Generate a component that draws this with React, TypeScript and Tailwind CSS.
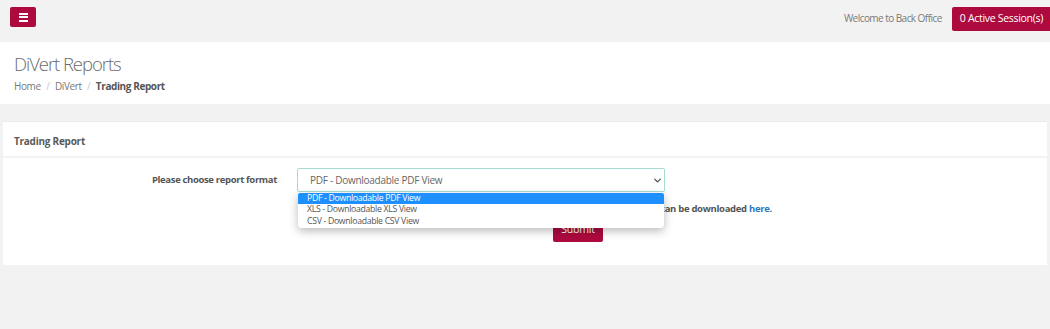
import { ChevronDown } from "lucide-react";

const crimson = "bg-[#ad0a3e]";

export default function App() {
  const options = [
    "PDF - Downloadable PDF View",
    "XLS - Downloadable XLS View",
    "CSV - Downloadable CSV View",
  ];

  return (
    <div className="min-h-[329px] bg-[#f2f2f2] font-['Open_Sans',sans-serif]">
      {/* Top bar */}
      <div className="flex h-[42px] items-start justify-between pt-[7px] pl-[10px]">
        <button className={`${crimson} flex h-[20px] w-[26px] flex-col items-center justify-center gap-[1.5px] rounded-[2px]`}>
          <span className="block h-[2px] w-[9px] bg-white" />
          <span className="block h-[2px] w-[9px] bg-white" />
          <span className="block h-[2px] w-[9px] bg-white" />
        </button>
        <div className="flex items-start gap-[10px]">
          <span className="pt-[4px] text-[10px] tracking-[-0.55px] text-[#7a7a7a]">Welcome to Back Office</span>
          <button className={`${crimson} h-[24px] rounded-l-[2px] pl-[8px] pr-[7px] text-[10.5px] tracking-[-0.3px] text-white`}>
            0 Active Session(s)
          </button>
        </div>
      </div>

      {/* Page header */}
      <div className="h-[62px] bg-white px-[14px] pt-[10px]">
        <h1 className="text-[18.5px] font-light leading-[24px] tracking-[-1.05px] text-[#6b6b6b]">DiVert Reports</h1>
        <div className="mt-[3px] flex items-center gap-[5.5px] text-[10px] tracking-[-0.4px] text-[#777]">
          <span>Home</span>
          <span className="text-[#c8c8c8]">/</span>
          <span>DiVert</span>
          <span className="text-[#c8c8c8]">/</span>
          <span className="font-bold text-[#555]">Trading Report</span>
        </div>
      </div>

      {/* Panel */}
      <div className="px-[3px] pt-[17px]">
        <div className="h-[144px] border-t border-[#ececec] bg-white">
          <div className="flex h-[36px] items-center border-b-2 border-[#f3f3f3] px-[11px] pt-[4px]">
            <span className="text-[10px] font-bold tracking-[-0.25px] text-[#5a5a5a]">Trading Report</span>
          </div>

          <div className="pt-[10px]">
            <div className="flex items-start">
              <div className="w-[274px] pt-[5px] text-right text-[9.5px] font-bold tracking-[-0.35px] text-[#555]">
                Please choose report format
              </div>
              <div className="relative ml-[20px] w-[368px]">
                <div className="flex h-[24px] items-center justify-between rounded-[2px] border border-[#a6dcd2] bg-white pl-[12px] pr-[1px] text-[10px] tracking-[-0.27px] text-[#666]">
                  <span>PDF - Downloadable PDF View</span>
                  <ChevronDown className="h-[11px] w-[11px] text-[#555]" strokeWidth={3} />
                </div>
                <div className="absolute left-[1px] right-[1px] top-[25px] z-10 overflow-hidden rounded-b-[4px] rounded-t-[2px] bg-white pb-[1px] shadow-[0_3px_10px_rgba(0,0,0,0.28)]">
                  {options.map((o, i) => (
                    <div
                      key={o}
                      className={`h-[11.3px] pl-[9px] text-[8.7px] leading-[11px] tracking-[-0.3px] ${
                        i === 0 ? "bg-[#1e8fff] text-white" : "text-[#555]"
                      }`}
                    >
                      {o}
                    </div>
                  ))}
                </div>
              </div>
            </div>

            <div className="mt-[10px] w-[769px] text-right text-[9.5px] font-bold leading-[14px] tracking-[-0.3px] text-[#555]">
              The trading report in the selected format can be downloaded{" "}
              <span className="text-[#2f7abf]">here.</span>
            </div>

            <div className="mt-[1px] flex pl-[550px]">
              <button className={`${crimson} h-[25px] w-[50px] rounded-[2px] text-[10.5px] tracking-[-0.2px] text-white`}>
                Submit
              </button>
            </div>
          </div>
        </div>
      </div>
    </div>
  );
}
